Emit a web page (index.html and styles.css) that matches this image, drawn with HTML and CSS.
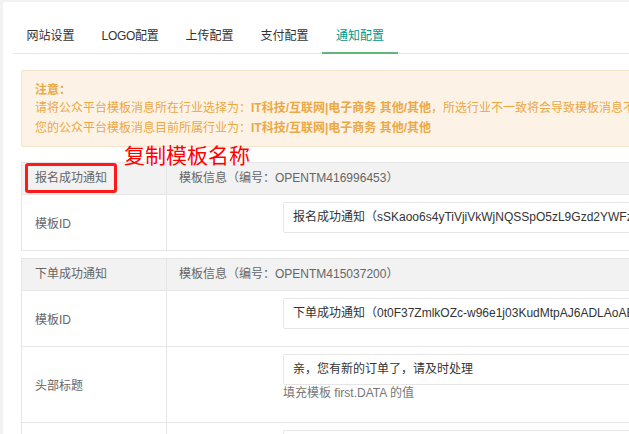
FILE: index.html
```html
<!DOCTYPE html>
<html lang="zh-CN">
<head>
<meta charset="utf-8">
<title>通知配置</title>
<link rel="stylesheet" href="styles.css">
</head>
<body>
<div class="panel">
  <ul class="tabs">
    <li class="tab">网站设置</li>
    <li class="tab tight">LOGO配置</li>
    <li class="tab">上传配置</li>
    <li class="tab">支付配置</li>
    <li class="tab active">通知配置</li>
  </ul>
  <div class="content">
    <div class="notice">
      <div class="notice-title">注意：</div>
      <div class="notice-line">请将公众平台模板消息所在行业选择为：<b>IT科技/互联网|电子商务 其他/其他</b>，所选行业不一致将会导致模板消息不可用，请务必正确设置</div>
      <div class="notice-line">您的公众平台模板消息目前所属行业为：<b>IT科技/互联网|电子商务 其他/其他</b></div>
    </div>

    <div class="table">
      <div class="head-cell label">报名成功通知</div>
      <div class="head-cell value-head">模板信息（编号：OPENTM416996453）</div>
      <div class="cell label">模板ID</div>
      <div class="cell value">
        <div class="input">报名成功通知（sSKaoo6s4yTiVjiVkWjNQSSpO5zL9Gzd2YWFzXq3bA8）</div>
      </div>
    </div>

    <div class="table second">
      <div class="head-cell label">下单成功通知</div>
      <div class="head-cell value-head">模板信息（编号：OPENTM415037200）</div>
      <div class="cell label">模板ID</div>
      <div class="cell value">
        <div class="input">下单成功通知（0t0F37ZmlkOZc-w96e1j03KudMtpAJ6ADLAoABcDeFg）</div>
      </div>
      <div class="cell label">头部标题</div>
      <div class="cell value tall">
        <div class="input">亲，您有新的订单了，请及时处理</div>
        <div class="help">填充模板 first.DATA 的值</div>
      </div>
      <div class="cell label">订单编号</div>
      <div class="cell value tall">
        <div class="input">订单编号</div>
        <div class="help">填充模板 keyword1.DATA 的值</div>
      </div>
    </div>
  </div>

  <div class="annotation">复制模板名称</div>
  <div class="highlight"></div>
</div>
</body>
</html>
```
FILE: styles.css
```css
html, body {
  margin: 0;
  padding: 0;
  overflow: hidden;
}
body {
  background: #f2f2f2;
  font-family: "Liberation Sans", "Noto Sans CJK SC", sans-serif;
  font-size: 12px;
  color: #333;
}
.panel {
  position: relative;
  margin: 2px 0 0 3px;
  width: 1000px;
  height: 600px;
  background: #fff;
  border-radius: 2px;
  padding: 17px 0 0 10px;
  box-sizing: border-box;
}
.tabs {
  display: flex;
  margin: 0;
  padding: 0;
  list-style: none;
  border-bottom: 1px solid #e6e6e6;
  height: 34px;
}
.tab {
  position: relative;
  padding: 0 13.5px;
  line-height: 34px;
  color: #333;
  white-space: nowrap;
}
.tab.tight {
  letter-spacing: -0.3px;
}
.tab.active {
  padding: 0 14px;
  color: #009688;
}
.tab.active::after {
  content: "";
  position: absolute;
  left: 0;
  right: 0;
  bottom: -1px;
  height: 2px;
  background: #5fb878;
}
.content {
  padding: 16px 0 0 8px;
}
.notice {
  background: #fcf3e6;
  border: 1px solid #f3e4cc;
  border-radius: 2px;
  padding: 11px 13px 8px;
  color: #eba845;
  white-space: nowrap;
}
.notice-title {
  font-weight: bold;
  line-height: 16px;
}
.notice-line {
  line-height: 20px;
}
.notice-line b {
  font-weight: bold;
}
.table {
  margin-top: 15px;
  display: grid;
  grid-template-columns: 145px 1fr;
  border: 1px solid #e6e6e6;
  border-bottom: none;
}
.table.second {
  margin-top: 7px;
}
.head-cell {
  background: #f2f2f2;
  height: 31px;
  line-height: 31px;
  border-bottom: 1px solid #e6e6e6;
  color: #666;
  white-space: nowrap;
}
.head-cell.label,
.cell.label {
  padding-left: 13px;
  border-right: 1px solid #e6e6e6;
}
.value-head {
  padding-left: 12px;
}
.cell {
  border-bottom: 1px solid #e6e6e6;
}
.cell.label {
  display: flex;
  align-items: center;
  color: #666;
}
.cell.value {
  padding: 7px 0 17px 116px;
}
.cell.value.tall {
  padding-bottom: 21px;
}
.input {
  height: 31px;
  box-sizing: border-box;
  border: 1px solid #e6e6e6;
  border-radius: 2px;
  padding-left: 9px;
  line-height: 29px;
  color: #333;
  white-space: nowrap;
  overflow: hidden;
  background: #fff;
}
.help {
  line-height: 16px;
  color: #777;
  white-space: nowrap;
}
.annotation {
  position: absolute;
  left: 121px;
  top: 143px;
  font-size: 21px;
  line-height: 22px;
  color: #ff0000;
  white-space: nowrap;
}
.highlight {
  position: absolute;
  left: 22px;
  top: 161px;
  width: 92px;
  height: 30px;
  box-sizing: border-box;
  border: 3px solid #ff1a1a;
  border-radius: 3px;
}
```
